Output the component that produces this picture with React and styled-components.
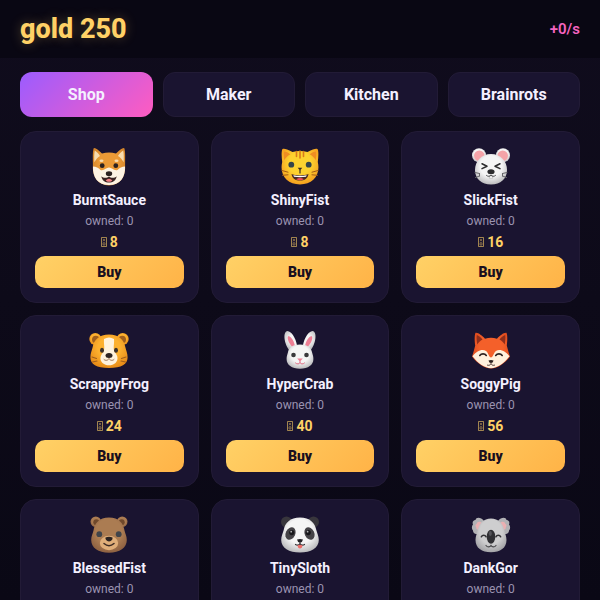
import React, { useState } from 'react';
import styled, { createGlobalStyle } from 'styled-components';

const GlobalStyle = createGlobalStyle`
    * {
        box-sizing: border-box;
    }

    body {
        margin: 0;
        min-height: 100vh;
        background: linear-gradient(180deg, #100c1d, #0a0815) fixed;
        color: #f4f0ff;
        font-family: Roboto, sans-serif;
    }
`

const Header = styled.header`
    display: flex;
    justify-content: space-between;
    align-items: center;
    padding: 14px 20px;
    background-color: #090713;
`

const Gold = styled.h1`
    margin: 0;
    font-size: 27px;
    line-height: 30px;
    font-weight: 800;
    color: #ffd166;
    text-shadow: 0 0 12px rgba(255, 209, 102, 0.3);
`

const Rate = styled.span`
    font-size: 15px;
    font-weight: 600;
    color: #f564c0;
`

const Tabs = styled.nav`
    display: flex;
    gap: 10px;
    padding: 14px 20px;
`

const Tab = styled.button`
    flex: 1;
    padding: 12px 0;
    border: 1px solid ${props => props.$active ? "transparent" : "#221b36"};
    border-radius: 12px;
    background: ${props => props.$active ? "linear-gradient(135deg, #9b5cff, #ff5cc0) border-box" : "#1a1430"};
    color: #f4f0ff;
    font-family: inherit;
    font-size: 16px;
    line-height: 19px;
    font-weight: 700;
    cursor: pointer;
`

const Grid = styled.main`
    display: grid;
    grid-template-columns: repeat(3, 1fr);
    gap: 12px;
    padding: 0 20px 20px;
`

const Card = styled.article`
    display: flex;
    flex-direction: column;
    align-items: center;
    gap: 6px;
    padding: 14px;
    border: 1px solid #221b36;
    border-radius: 16px;
    background-color: #1a1430;
`

const Face = styled.svg`
    width: 40px;
    height: 40px;
`

const Name = styled.h2`
    margin: 0;
    font-size: 14px;
    line-height: 16px;
    font-weight: 700;
`

const Owned = styled.span`
    font-size: 12px;
    line-height: 14px;
    color: #9a93b0;
`

const Price = styled.span`
    display: flex;
    align-items: center;
    gap: 3px;
    font-size: 14px;
    line-height: 16px;
    font-weight: 700;
    color: #ffd166;
`

const BuyButton = styled.button`
    width: 100%;
    padding: 8px;
    border: none;
    border-radius: 10px;
    background: linear-gradient(135deg, #ffd166, #ffb347);
    color: #1a0f1f;
    font-family: inherit;
    font-size: 14px;
    line-height: 16px;
    font-weight: 900;
    cursor: pointer;
`

const Coin = () => (
    <svg width="6" height="10" viewBox="0 0 6 10" fill="none" stroke="currentColor" aria-hidden="true">
        <path d="M.5.5h5v9h-5z" strokeWidth=".7" opacity=".85" />
        <path d="M2 2l2 2.200M4 2L2 4.200M2 5.800h2v2.200H2z" strokeWidth=".7" opacity=".6" />
    </svg>
)

// shared shading for all of the animal faces
const Shades = () => (
    <svg width="0" height="0" style={{ display: "block" }} aria-hidden="true">
        <defs>
            <radialGradient id="shiba" cx=".5" cy=".4" r=".6">
                <stop offset=".5" stopColor="#eb9a36" />
                <stop offset="1" stopColor="#cf8129" />
            </radialGradient>
            <radialGradient id="yellow" cx=".5" cy=".4" r=".6">
                <stop offset=".5" stopColor="#fdd22f" />
                <stop offset="1" stopColor="#f5a01f" />
            </radialGradient>
            <radialGradient id="white" cx=".5" cy=".4" r=".62">
                <stop offset=".55" stopColor="#f5f5f5" />
                <stop offset="1" stopColor="#b9b9bb" />
            </radialGradient>
            <radialGradient id="hamster" cx=".5" cy=".4" r=".6">
                <stop offset=".5" stopColor="#fdb12f" />
                <stop offset="1" stopColor="#e88d18" />
            </radialGradient>
            <radialGradient id="fox" cx=".5" cy=".4" r=".6">
                <stop offset=".5" stopColor="#f4602a" />
                <stop offset="1" stopColor="#d9471b" />
            </radialGradient>
            <radialGradient id="bear" cx=".5" cy=".4" r=".6">
                <stop offset=".6" stopColor="#ab7c52" />
                <stop offset="1" stopColor="#8f6242" />
            </radialGradient>
            <radialGradient id="koala" cx=".5" cy=".4" r=".6">
                <stop offset=".6" stopColor="#cececf" />
                <stop offset="1" stopColor="#a5a5a8" />
            </radialGradient>
        </defs>
    </svg>
)

const faces = {
    dog: (
        <>
            <path d="M4.500 2.500C5.500.8 8.500 3 13 7.600q7-2.200 14 0C31.500 3 34.500.8 35.500 2.500c1 4 .6 9 .6 16 1 12-5 20.900-16.100 20.900S2.900 30.500 3.900 18.500c0-7-.4-12 .6-16z" fill="url(#shiba)" />
            <path d="M5.800 4.500C8 6 9.900 8 11 10c-2.600 1.600-4.200 3.800-5.600 6.300-.3-4-.3-8.800.4-11.800zM34.200 4.500C32 6 30.100 8 29 10c2.600 1.600 4.200 3.800 5.600 6.300.3-4 .3-8.800-.4-11.800z" fill="#f8dcae" />
            <path d="M4 20.500c3 0 5.500 1.500 7.500 3.500 4 1 5.500-2.500 8.500-2.500s4.500 3.500 8.500 2.500c2-2 4.500-3.500 7.500-3.500C36.500 31.500 31 39 20 39S3.500 31.500 4 20.500z" fill="#fdf3e3" />
            <ellipse cx="12.500" cy="14.700" rx="2" ry="1.200" fill="#f8dcae" />
            <ellipse cx="27.500" cy="14.700" rx="2" ry="1.200" fill="#f8dcae" />
            <circle cx="13.200" cy="19.700" r="2.400" fill="#2b2220" />
            <circle cx="26.800" cy="19.700" r="2.400" fill="#2b2220" />
            <path d="M12.300 30.200c2.200 2.200 6 2 7.700 0 1.700 2 5.500 2.200 7.700 0-.8 4.300-3.700 6.300-7.700 6.300s-6.900-2-7.700-6.300z" fill="#3a2422" />
            <path d="M16.800 34.300q3.200-3 6.400 0c-1 2-5.400 2-6.400 0z" fill="#f47f83" />
            <ellipse cx="20" cy="27.700" rx="3.200" ry="2.400" fill="#2b2220" />
        </>
    ),
    cat: (
        <>
            <path d="M2 4C2.500 2 5 2 12.500 6q7.500-2.200 15 0C35 2 37.500 2 38 4c.8 4 .2 8-.2 12 3 13-5 22.500-17.800 22.500S-.8 29 2.200 16C1.800 12 1.200 8 2 4z" fill="url(#yellow)" />
            <path d="M4 5.500c2 0 4.500 1.200 6.300 2.700C7.500 9.800 5.500 12 4.300 14.200 3.700 11 3.500 8 4 5.500zM36 5.500c-2 0-4.500 1.200-6.300 2.700 2.800 1.600 4.800 3.800 6 6 .6-3.200.8-6.200.3-8.700z" fill="#ef8d22" />
            <path d="M16.500 5.500v5M20 5v7M23.500 5.500v5" stroke="#d9791b" strokeWidth="1.600" strokeLinecap="round" />
            <circle cx="11.300" cy="18.700" r="2.900" fill="#35454a" />
            <circle cx="28.700" cy="18.700" r="2.900" fill="#35454a" />
            <path d="M17.700 21.800h4.600L20 24.600z" fill="#3d2c22" />
            <path d="M20 24v3.500" stroke="#3d2c22" strokeWidth="1.200" />
            <path d="M11.500 28c3 1.600 14 1.600 17 0-.6 4.400-3.900 6.600-8.500 6.600s-7.900-2.200-8.500-6.600z" fill="#4a2a23" />
            <path d="M13.300 29.200q6.700 1.200 13.400 0l-.7 1.500q-6 .9-12 0z" fill="#fff" />
            <path d="M16 33.200q4-2.400 8 0-4 2-8 0z" fill="#ef4b55" />
            <path d="M2 24.500l6 1.700M2.500 29.300l5.500-.5M38 24.500l-6 1.700M37.500 29.300l-5.500-.5" stroke="#a05a16" strokeWidth="1" strokeLinecap="round" />
        </>
    ),
    mouse: (
        <>
            <circle cx="8" cy="9.300" r="7" fill="url(#white)" />
            <circle cx="32" cy="9.300" r="7" fill="url(#white)" />
            <circle cx="8.300" cy="9.800" r="5.300" fill="#f4a3a8" />
            <circle cx="31.700" cy="9.800" r="5.300" fill="#f4a3a8" />
            <path d="M20 8c9.500 0 16 7 16 16s-6.500 14.400-16 14.400S4 33 4 24 10.500 8 20 8z" fill="url(#white)" />
            <path d="M11 17.800l5 2.400-5 2.400M29 17.800l-5 2.400 5 2.400" fill="none" stroke="#2c2c2e" strokeWidth="1.500" strokeLinecap="round" strokeLinejoin="round" />
            <ellipse cx="20" cy="25.800" rx="3.600" ry="2.500" fill="#2c2c2e" />
            <path d="M18.300 30h3.400v2.200h-3.400z" fill="#fff" stroke="#999" strokeWidth=".5" />
            <path d="M15.500 29.500c1.500 1.300 3.500 1 4.500-.5 1 1.500 3 1.800 4.500.5" fill="none" stroke="#4b4b4d" strokeWidth="1" strokeLinecap="round" />
            <path d="M4 26.500l4.500 1M4.500 31.500l4-1.500M8.500 27.500v2.500M36 26.500l-4.500 1M35.500 31.500l-4-1.500M31.500 27.500v2.500" stroke="#666669" strokeWidth="1" strokeLinecap="round" />
        </>
    ),
    hamster: (
        <>
            <circle cx="6.300" cy="9" r="6" fill="url(#hamster)" />
            <circle cx="33.700" cy="9" r="6" fill="url(#hamster)" />
            <circle cx="6.800" cy="9.500" r="3.800" fill="#a05f1d" />
            <circle cx="33.200" cy="9.500" r="3.800" fill="#a05f1d" />
            <path d="M20 4.500c10 0 15 5.500 16.300 12.500.8 3.500 2.300 6 2.300 10.500 0 6.500-6 10.500-18.600 10.500S1.400 34 1.400 27.500C1.400 23 2.900 20.500 3.700 17 5 10 10 4.500 20 4.500z" fill="url(#hamster)" />
            <path d="M15 9q5-3 10 0c.5 6-1.500 9.500 1 13.500 3 3.500 3.500 7.500.5 10.500-2 1.700-4 2.300-6.500 2.300s-4.500-.6-6.500-2.300c-3-3-2.500-7 .5-10.500 2.500-4 .5-7.500 1-13.500z" fill="#fff3dd" />
            <ellipse cx="13" cy="20.200" rx="2" ry="2.500" fill="#3a302b" />
            <ellipse cx="27" cy="20.200" rx="2" ry="2.500" fill="#3a302b" />
            <ellipse cx="20" cy="25.500" rx="3.500" ry="2.500" fill="#2f2522" />
            <path d="M15 29.500c1.500 1.500 4 1 5-1 1 2 3.500 2.500 5 1" fill="none" stroke="#9b7050" strokeWidth="1" strokeLinecap="round" />
            <path d="M3 27l4.500 1.500M3.500 32l4.500-1M37 27l-4.500 1.500M36.500 32l-4.500-1" stroke="#a05f1d" strokeWidth="1.100" strokeLinecap="round" />
        </>
    ),
    rabbit: (
        <>
            <path d="M17.500 19C17 11 13 2 7.500 1 2.500 1.500 4 14.500 10 21zM22.500 19c.5-8 4.500-17 10-18 5 .5 3.500 13.500-2.500 20z" fill="url(#white)" />
            <path d="M15 16.500C14.500 11.500 11.500 7 8.500 6 6.500 7.500 8.500 13 12.500 17zM25 16.500c.5-5 3.500-9.500 6.500-10.500 2 1.500 0 7-4 11z" fill="#ee7f95" />
            <path d="M20 14.500c7.500 0 11.300 3.500 12.100 8 .5 2 1.300 3.500 1.300 6.500 0 6-5.100 9.700-13.400 9.700S6.600 35 6.600 29c0-3 .8-4.500 1.300-6.500.8-4.500 4.600-8 12.100-8z" fill="url(#white)" />
            <circle cx="13.500" cy="25" r="2.300" fill="#39393b" />
            <circle cx="26.500" cy="25" r="2.300" fill="#39393b" />
            <path d="M17.200 28.500h5.600L20 31.500z" fill="#f07f98" />
            <path d="M20 31v1.500M15.500 33c1.500 1.500 4 1.200 4.500-.5.500 1.700 3 2 4.500.5" fill="none" stroke="#df7188" strokeWidth="1" strokeLinecap="round" />
        </>
    ),
    fox: (
        <>
            <path d="M4.500 2.800C7 2.200 11 5.500 14 8.700q6-1.800 12 0c3-3.200 7-6.500 9.500-5.900 1.300 3.200.8 9 .3 12.700 1 4 2.200 8.500 3.200 11C33.500 34 26 38.500 20 38.500S6.500 34 1 26.500c1-2.500 2.200-7 3.200-11C3.700 11.800 3.200 6 4.500 2.800z" fill="url(#fox)" />
            <path d="M5.800 5c2 .7 4.200 2.500 5.700 4.500-2.300 1.300-4 3-5.200 5C5.700 11 5.300 8 5.800 5zM34.200 5c-2 .7-4.200 2.500-5.700 4.500 2.300 1.300 4 3 5.200 5 .6-3.500 1-6.500.5-9.500z" fill="#8e2e1b" />
            <path d="M1.500 26.300C5 21.500 11 18.500 15 21c2.500 2 3 6.500 5 6.500s2.500-4.500 5-6.500c4-2.500 10 .5 13.500 5.300C33 33.500 26 38.200 20 38.200S7 33.500 1.500 26.300z" fill="#fff0dc" />
            <path d="M8.800 25.500c1.500-2.200 5-2.200 6.500 0M24.700 25.500c1.500-2.200 5-2.200 6.500 0" fill="none" stroke="#2d211f" strokeWidth="1.600" strokeLinecap="round" />
            <path d="M17.500 30.500q2.500-1.200 5 0Q22 33 20 33t-2.500-2.500z" fill="#2d211f" />
            <path d="M16.500 35.200c1.500.5 3-.2 3.500-1.700.5 1.500 2 2.200 3.500 1.700" fill="none" stroke="#4a3430" strokeWidth="1" strokeLinecap="round" />
        </>
    ),
    bear: (
        <>
            <circle cx="6.800" cy="7.800" r="5.300" fill="url(#bear)" />
            <circle cx="33.200" cy="7.800" r="5.300" fill="url(#bear)" />
            <circle cx="7.300" cy="8.300" r="3" fill="#6f482b" />
            <circle cx="32.700" cy="8.300" r="3" fill="#6f482b" />
            <path d="M20 3.500c10 0 14.500 6 15.500 13 .7 3 2.300 5.500 2.300 9.500 0 8-7 12.700-17.800 12.700S2.200 34 2.200 26c0-4 1.600-6.500 2.300-9.500 1-7 5.500-13 15.500-13z" fill="url(#bear)" />
            <ellipse cx="20" cy="29" rx="9.200" ry="7.200" fill="#dfae79" />
            <circle cx="10.300" cy="20.200" r="2.900" fill="#40444a" />
            <circle cx="29.700" cy="20.200" r="2.900" fill="#40444a" />
            <path d="M16.500 23.500q3.500-1.500 7 0 .5 3-3.500 4-4-1-3.500-4z" fill="#2c2321" />
            <path d="M15 29.500q5 4.500 10 0" fill="none" stroke="#3d2a22" strokeWidth="1.500" strokeLinecap="round" />
        </>
    ),
    panda: (
        <>
            <circle cx="6.500" cy="8" r="5.500" fill="#38363c" />
            <circle cx="33.500" cy="8" r="5.500" fill="#38363c" />
            <path d="M20 3.500c10 0 15 5.500 16.300 12.500.8 3 2.500 6 2.500 10 0 8-7.800 12.500-18.800 12.500S1.200 34 1.200 26c0-4 1.700-7 2.500-10C5 9 10 3.500 20 3.500z" fill="url(#white)" />
            <ellipse cx="10.500" cy="19.500" rx="4.800" ry="6.500" transform="rotate(25 10.500 19.500)" fill="#454347" />
            <ellipse cx="29.500" cy="19.500" rx="4.800" ry="6.500" transform="rotate(-25 29.500 19.500)" fill="#454347" />
            <circle cx="11.800" cy="18.600" r="2.600" fill="#17171a" />
            <circle cx="28.200" cy="18.600" r="2.600" fill="#17171a" />
            <circle cx="11.200" cy="17.700" r=".9" fill="#b5b5b8" />
            <circle cx="27.600" cy="17.700" r=".9" fill="#b5b5b8" />
            <path d="M17 25.500q3-1.200 6 0-.5 2.800-3 3.300-2.500-.5-3-3.300z" fill="#242326" />
            <path d="M15.500 30.500c1.500 1 4 .8 4.500-1 .5 1.800 3 2 4.500 1" fill="none" stroke="#343236" strokeWidth="1.200" strokeLinecap="round" />
            <path d="M17.500 31.600q2.500-1.600 5 0-.3 3-2.500 3t-2.500-3z" fill="#ec6c68" />
        </>
    ),
    koala: (
        <>
            <path d="M13 7C10 3 5 3 4.500 6 2 6 1 8.500 2 10.500.5 12 .5 15 2 16.500 2 19 4 20.500 6 20zM27 7c3-4 8-4 8.500-1 2.500 0 3.500 2.500 2.500 4.500 1.500 1.500 1.500 4.500 0 6 0 2.500-2 4-4 3.500z" fill="#b2b2b5" />
            <path d="M11 9C8.500 6.500 5.500 8 5.800 9.800c-1.800.8-1.500 2.700-.6 3.500C5 15 6.500 16 8 16zM29 9c2.500-2.500 5.500-1 5.200.8 1.800.8 1.500 2.700.6 3.500.2 1.700-1.300 2.700-2.800 2.700z" fill="#eab0b2" />
            <path d="M20 4.500c7.500 0 12 5 13.200 11.500.7 3 2.300 6 2.300 10 0 8-6.300 12.200-15.500 12.200S4.500 34 4.500 26c0-4 1.600-7 2.300-10C8 9.500 12.500 4.500 20 4.500z" fill="url(#koala)" />
            <ellipse cx="20" cy="22.800" rx="4.300" ry="7" fill="#303034" />
            <ellipse cx="19.300" cy="19.500" rx="1.500" ry="2.400" fill="#56565b" />
            <path d="M10.300 22.800c1-2 3.800-2 4.800 0M24.900 22.800c1-2 3.800-2 4.800 0" fill="none" stroke="#333336" strokeWidth="1.500" strokeLinecap="round" />
            <path d="M15 31.500c1.500 2 4 1.800 5 0 1 1.800 3.500 2 5 0" fill="none" stroke="#47474a" strokeWidth="1.200" strokeLinecap="round" />
        </>
    ),
};

const tabs = ["Shop", "Maker", "Kitchen", "Brainrots"];

const items = [
    { name: "BurntSauce", face: "dog", price: 8 },
    { name: "ShinyFist", face: "cat", price: 8 },
    { name: "SlickFist", face: "mouse", price: 16 },
    { name: "ScrappyFrog", face: "hamster", price: 24 },
    { name: "HyperCrab", face: "rabbit", price: 40 },
    { name: "SoggyPig", face: "fox", price: 56 },
    { name: "BlessedFist", face: "bear", price: 80 },
    { name: "TinySloth", face: "panda", price: 104 },
    { name: "DankGor", face: "koala", price: 136 },
];

const App = () => {
    const [active, setActive] = useState("Shop");

    return (
        <>
            <GlobalStyle />
            <Shades />
            <Header>
                <Gold>gold 250</Gold>
                <Rate>+0/s</Rate>
            </Header>
            <Tabs>
                {tabs.map(tab => (
                    <Tab key={tab} $active={tab === active} onClick={() => setActive(tab)}>{tab}</Tab>
                ))}
            </Tabs>
            <Grid>
                {items.map(item => (
                    <Card key={item.name}>
                        <Face viewBox="0 0 40 40" role="img" aria-label={item.face}>{faces[item.face]}</Face>
                        <Name>{item.name}</Name>
                        <Owned>owned: 0</Owned>
                        <Price><Coin />{item.price}</Price>
                        <BuyButton>Buy</BuyButton>
                    </Card>
                ))}
            </Grid>
        </>
    )
}

export default App
